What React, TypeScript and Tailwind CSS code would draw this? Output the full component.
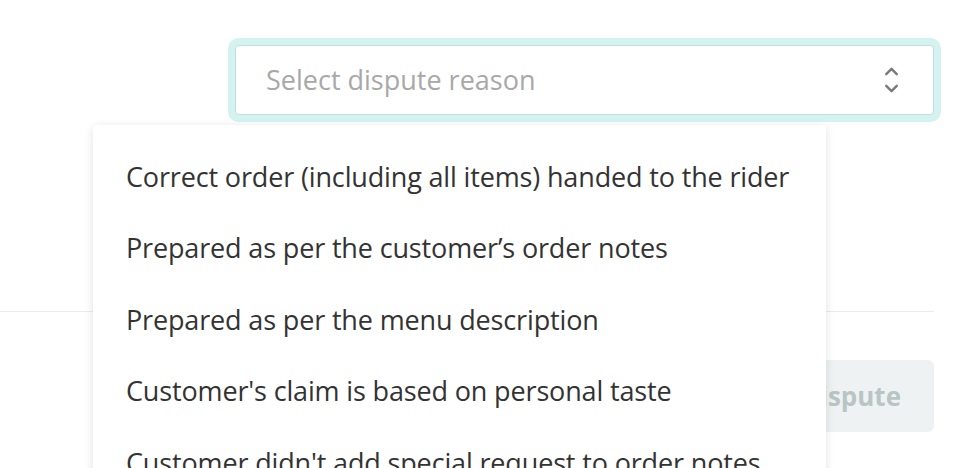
import { ChevronUp, ChevronDown } from 'lucide-react';

const REASONS = [
  'Correct order (including all items) handed to the rider',
  'Prepared as per the customer\u2019s order notes',
  'Prepared as per the menu description',
  "Customer's claim is based on personal taste",
  "Customer didn't add special request to order notes",
  'Other',
];

export default function App() {
  return (
    <div className="relative w-[972px] h-[468px] overflow-hidden bg-white font-['Open_Sans',sans-serif]">
      <div className="pr-[38px]">
        <div className="pt-[45px] pl-[235px]">
          <div className="flex h-[70px] items-center justify-between rounded-[4px] border border-[#bfe1de] bg-white pl-[30px] pr-[31px] shadow-[0_0_0_7px_#d4f2ef]">
            <span className="text-[27px] text-[#a8a8a8]">Select dispute reason</span>
            <span className="flex flex-col items-center text-[#7a7a7a]">
              <ChevronUp className="-mb-[4px] h-[21px] w-[21px]" strokeWidth={2.8} />
              <ChevronDown className="h-[21px] w-[21px]" strokeWidth={2.8} />
            </span>
          </div>
        </div>

        <div className="mt-[196px] border-t border-[#ebebeb]" />

        <div className="mt-[48px] flex justify-end">
          <button
            type="button"
            className="h-[72px] rounded-[6px] bg-[#eff2f2] px-[33px] text-[26px] font-bold text-[#b9c5c5]"
          >
            Submit dispute
          </button>
        </div>
      </div>

      <div className="absolute left-[93px] top-[125px] w-[733px] rounded-[4px] bg-white py-[16px] shadow-[0_2px_10px_rgba(0,0,0,0.12)]">
        {REASONS.map((reason) => (
          <div
            key={reason}
            className="flex h-[71.5px] items-center whitespace-nowrap px-[33px] text-[27px] tracking-[-0.15px] text-[#333333]"
          >
            {reason}
          </div>
        ))}
      </div>
    </div>
  );
}
